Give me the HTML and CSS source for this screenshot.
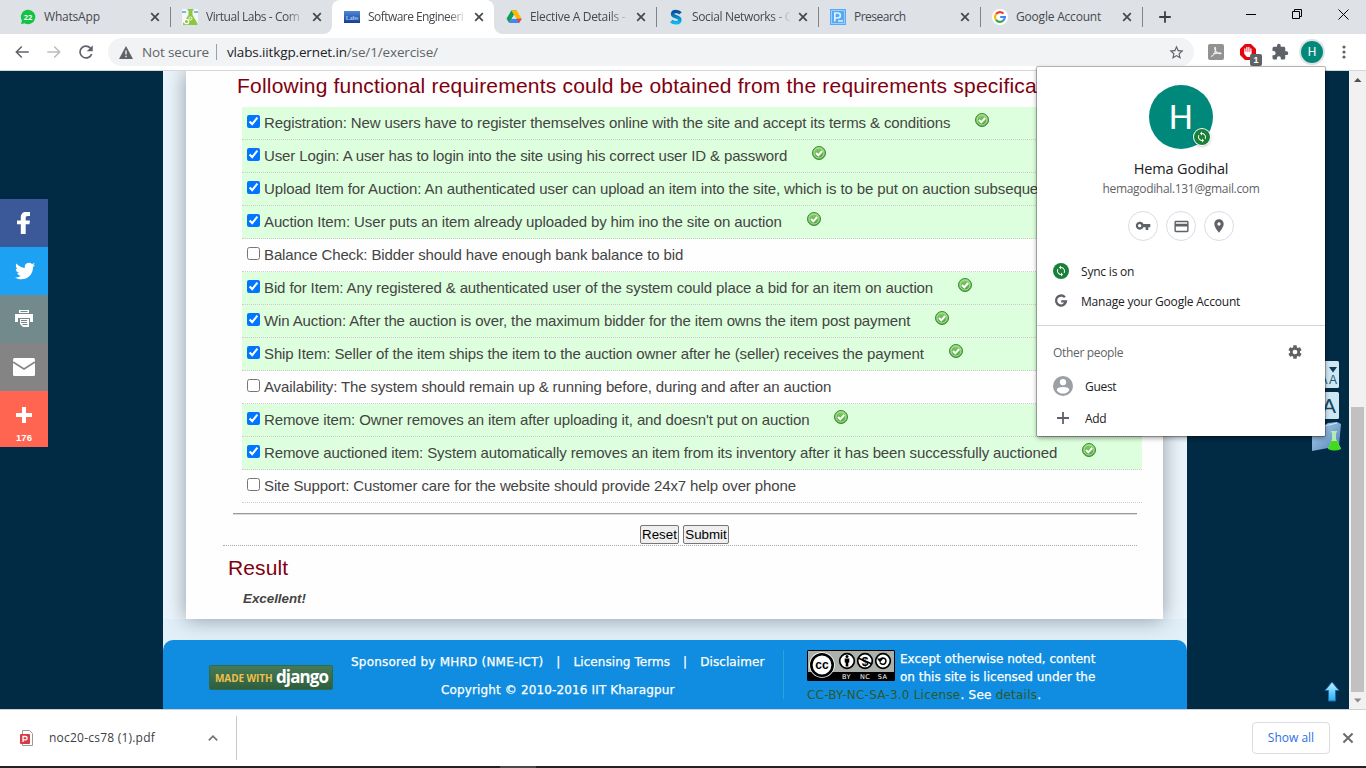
FILE: index.html
```html
<!DOCTYPE html>
<html lang="en">
<head>
<meta charset="utf-8">
<title>Software Engineering Virtual Lab</title>
<link rel="stylesheet" href="styles.css">
</head>
<body>
<svg class="defs" width="0" height="0">
  <defs>
    <linearGradient id="tickFill" x1="0" y1="0" x2="0" y2="1"><stop offset="0" stop-color="#8ad46c"/><stop offset="1" stop-color="#4a9e3c"/></linearGradient>
    <symbol id="tick" viewBox="0 0 14 14"><circle cx="7" cy="7" r="6.5" fill="url(#tickFill)" stroke="#3c8a38"/><circle cx="7" cy="7" r="5" fill="none" stroke="#b9e6a6" stroke-width=".9"/><path d="M4 7l2.3 2.3L10.2 5" fill="none" stroke="#fff" stroke-width="2"/></symbol>
    <symbol id="cross" viewBox="0 0 10 10"><path d="M1.2 1.2l7.6 7.6M8.8 1.2L1.2 8.8" fill="none" stroke="currentColor" stroke-width="1.7"/></symbol>
    <symbol id="sync" viewBox="0 0 24 24"><path fill="#fff" d="M12 4V1L8 5l4 4V6c3.31 0 6 2.69 6 6 0 1.01-.25 1.97-.7 2.8l1.46 1.46C19.54 15.03 20 13.57 20 12c0-4.42-3.58-8-8-8zm0 14c-3.31 0-6-2.69-6-6 0-1.01.25-1.97.7-2.8L5.24 7.74C4.46 8.97 4 10.43 4 12c0 4.42 3.58 8 8 8v3l4-4-4-4v3z"/></symbol>
  </defs>
</svg>

<header class="tabstrip">
  <div class="tab">
    <svg class="fav" viewBox="0 0 16 16"><path d="M8 .8a7.2 7.2 0 1 1-3.4 13.5L1 15.3l.9-3.6A7.2 7.2 0 0 1 8 .8z" fill="#12c443"/><text x="8" y="11" text-anchor="middle" class="fav-num">22</text></svg>
    <span class="tab-name t1">WhatsApp</span><svg class="close"><use href="#cross"/></svg>
  </div>
  <div class="tab sep">
    <svg class="fav" viewBox="0 0 16 16"><rect width="16" height="16" fill="#f4f6f7"/><path d="M0 3h4M12 3h4" stroke="#4aa9d8" stroke-width="1.4"/><path d="M5.5 0h6v1.5h-1V6l5 8.5V16H1v-1.5L6.500 6V1.500h-1z" fill="#8dc63f"/><circle cx="4.500" cy="12.500" r="2.200" fill="#8dc63f" stroke="#fff" stroke-width="1.300"/><circle cx="8.500" cy="9.500" r="1.500" fill="#8dc63f" stroke="#fff"/></svg>
    <span class="tab-name t2">Virtual Labs - Com</span><svg class="close"><use href="#cross"/></svg>
  </div>
  <div class="tab active">
    <svg class="fav" viewBox="0 0 16 16"><defs><linearGradient id="lb" x1="0" y1="0" x2="0" y2="1"><stop offset="0" stop-color="#4d86d8"/><stop offset="1" stop-color="#143f92"/></linearGradient></defs><rect y="2" width="16" height="12" fill="url(#lb)"/><text x="8" y="11" text-anchor="middle" class="fav-labs">Labs</text></svg>
    <span class="tab-name t3">Software Engineeri</span><svg class="close"><use href="#cross"/></svg>
  </div>
  <div class="tab">
    <svg class="fav" viewBox="0 0 16 16"><path d="M5.300 1.500h5.400L8 6.100 3.200 14 .5 9.800z" fill="#0f9d58"/><path d="M5.300 1.500h5.400l5 8.300h-5.200z" fill="#ffba00"/><path d="M3.200 14l2.500-4.200h10L13 14z" fill="#4285f4"/><path d="M10.500 9.800h5.200L13 14z" fill="#ea4335"/><path d="M8 6l2.300 3.800H5.700z" fill="#dee1e6"/></svg>
    <span class="tab-name t4">Elective A Details -</span><svg class="close"><use href="#cross"/></svg>
  </div>
  <div class="tab sep">
    <svg class="fav" viewBox="0 0 16 16"><defs><linearGradient id="sg" x1="0" y1="0" x2="0" y2="1"><stop offset="0" stop-color="#07509f"/><stop offset="1" stop-color="#0cb6ef"/></linearGradient></defs><path d="M12.500 4.400C10.500 2.200 4.600 1.400 4.600 5c0 3.500 7.200 2 7.200 5.900 0 3.500-6 3.500-8.600 1.200" fill="none" stroke="url(#sg)" stroke-width="3.600"/></svg>
    <span class="tab-name t5">Social Networks - C</span><svg class="close"><use href="#cross"/></svg>
  </div>
  <div class="tab sep">
    <svg class="fav" viewBox="0 0 16 16"><rect width="16" height="16" fill="#56a9f7"/><path d="M1.500 1.500h13v13h-13z" fill="none" stroke="#b3d8fc" stroke-width=".8"/><path d="M4.800 12.500V4h3a2.500 2.500 0 0 1 0 5h-3M8 12h5" fill="none" stroke="#e4f2ff" stroke-width="1.600"/></svg>
    <span class="tab-name t6">Presearch</span><svg class="close"><use href="#cross"/></svg>
  </div>
  <div class="tab sep">
    <svg class="fav" viewBox="0 0 16 16"><circle cx="8" cy="8" r="8" fill="#fff"/><g fill="none" stroke-width="2.200"><path d="M4 5.200A4.900 4.900 0 0 1 11.500 4.600" stroke="#ea4335"/><path d="M4 5.200a4.900 4.900 0 0 0 0 5.600" stroke="#fbbc05"/><path d="M4 10.800a4.900 4.900 0 0 0 7.200.8" stroke="#34a853"/><path d="M11.200 11.600A4.900 4.900 0 0 0 12.900 8H8.200" stroke="#4285f4"/></g></svg>
    <span class="tab-name t7">Google Account</span><svg class="close"><use href="#cross"/></svg>
  </div>
  <div class="newtab"><svg width="12" height="12" viewBox="0 0 12 12"><path d="M6 .2v11.600M.2 6h11.600" stroke="#3c4043" stroke-width="1.800"/></svg></div>
  <div class="winbtns">
    <svg width="10" height="12" viewBox="0 0 10 12"><path d="M0 5.500h10" stroke="#000"/></svg>
    <svg width="10" height="10" viewBox="0 0 10 10"><path d="M.5 2.500h7v7h-7zM2.500 2.500v-2h7v7h-2" fill="none" stroke="#000"/></svg>
    <svg width="11" height="11" viewBox="0 0 11 11"><path d="M.5.5l10 10M10.500.5l-10 10" stroke="#000"/></svg>
  </div>
</header>

<nav class="toolbar">
  <svg class="nav" viewBox="0 0 24 24"><path fill="#5f6368" d="M21 11H6.800l5.600-5.600L11 4l-8 8 8 8 1.400-1.400L6.800 13H21z"/></svg>
  <svg class="nav" viewBox="0 0 24 24"><path fill="#babcbe" d="M3 11h14.200l-5.600-5.600L13 4l8 8-8 8-1.400-1.400 5.600-5.600H3z"/></svg>
  <svg class="nav" viewBox="0 0 24 24"><path fill="#5f6368" d="M18.400 5.600A9 9 0 1 0 20.700 14.500h-2.400A6.800 6.800 0 1 1 16.800 7.200L13 11h8V3z"/></svg>
  <div class="omnibox">
    <svg width="14" height="13" viewBox="0 0 14 13"><path d="M7 0l7 13H0z" fill="#5f6368"/><path d="M7 4.500v4M7 9.700v1.500" stroke="#fff" stroke-width="1.300"/></svg>
    <span class="insecure">Not secure</span><i></i><span class="url">vlabs.iitkgp.ernet.in<b>/se/1/exercise/</b></span>
    <svg class="star" viewBox="0 0 24 24"><path fill="#5f6368" d="M22 9.240l-7.190-.62L12 2 9.190 8.630 2 9.240l5.460 4.730L5.820 21 12 17.270 18.180 21l-1.630-7.030L22 9.240zM12 15.400l-3.760 2.270 1-4.280-3.320-2.880 4.380-.38L12 6.100l1.710 4.040 4.380.38-3.320 2.880 1 4.280L12 15.400z"/></svg>
  </div>
  <div class="exts">
    <svg width="16" height="16" viewBox="0 0 16 16"><rect width="16" height="16" rx="2" fill="#929292"/><path d="M3 12.500c2.500-1 5.200-5 4.600-8.500-.3-1.400-1.500-.5-.8 1.200 1 2.600 3.200 5 6.200 4.400 1-.9-4-1.200-8 .7" fill="none" stroke="#eee" stroke-width="1.100"/></svg>
    <div class="blocker"><svg width="16" height="16" viewBox="0 0 16 16"><path d="M5 0h6l5 5v6l-5 5H5l-5-5V5z" fill="#e3060f"/><path d="M4.900 8V5M6.900 7V3.400M8.900 7V3.400M10.900 8V5" stroke="#fff" stroke-width="1.300" stroke-linecap="round"/><path d="M4.300 7.500h7.200v2.500l-1.700 3H7l-2.700-3z" fill="#fff"/></svg><span>1</span></div>
    <svg class="puzzle" width="18" height="18" viewBox="0 0 24 24"><path fill="#5f6368" d="M20.500 11H19V7c0-1.100-.9-2-2-2h-4V3.500a2.500 2.500 0 0 0-5 0V5H4c-1.100 0-2 .9-2 2v3.800h1.500a2.700 2.700 0 0 1 0 5.400H2V20c0 1.100.9 2 2 2h3.800v-1.500a2.700 2.700 0 0 1 5.400 0V22H17c1.100 0 2-.9 2-2v-4h1.500a2.500 2.500 0 0 0 0-5z"/></svg>
    <div class="me">H</div>
    <svg class="kebab" width="4" height="16" viewBox="0 0 4 16"><g fill="#5f6368"><circle cx="2" cy="3" r="1.600"/><circle cx="2" cy="8" r="1.600"/><circle cx="2" cy="13" r="1.600"/></g></svg>
  </div>
</nav>

<main class="viewport">
  <aside class="share">
    <div class="fb"><svg width="24" height="24" viewBox="0 0 24 24"><path fill="#fff" d="M8.800 23V13.200H5V9.600h3.800V6.500C8.800 3 10.600 1 14 1h4v3.900h-2.300c-1.500 0-2 .7-2 2v2.700H18l-.6 3.600h-3.700V23z"/></svg></div>
    <div class="tw"><svg width="24" height="24" viewBox="0 0 24 24"><path fill="#fff" d="M23.200 5.700c-.7.300-1.500.6-2.400.7.900-.5 1.500-1.300 1.800-2.300-.8.500-1.700.8-2.600 1A4.150 4.150 0 0 0 12.900 8.900C9.500 8.700 6.400 7.100 4.400 4.600c-1.100 1.900-.6 4.300 1.300 5.600-.7 0-1.300-.2-1.900-.5 0 2 1.400 3.700 3.300 4.100-.6.200-1.200.2-1.900.1.500 1.600 2 2.800 3.900 2.900A8.400 8.400 0 0 1 3 18.500c1.800 1.200 4 1.800 6.300 1.800 7.600 0 11.900-6.400 11.700-12.400.9-.6 1.600-1.300 2.200-2.200z"/></svg></div>
    <div class="pr"><svg width="20" height="20" viewBox="0 0 20 20"><path fill="#fff" d="M5 1h10v3H5zM1 5h18v8h-3V9H4v4H1zM6 10h9v8h-6l-3-3z"/><path d="M6.500 2.500h7" stroke="#738a8d"/><path d="M7 11.500h6M7 13.500h6M8.500 15.500h5" stroke="#738a8d"/></svg></div>
    <div class="ml"><svg width="22" height="18" viewBox="0 0 22 18"><rect width="22" height="18" rx="1.500" fill="#fff"/><path d="M0 4l11 7 11-7" fill="none" stroke="#848484" stroke-width="1.600"/></svg></div>
    <div class="more"><svg width="16" height="16" viewBox="0 0 16 16"><path d="M8 0v16M0 8h16" stroke="#fff" stroke-width="4"/></svg><span>176</span></div>
  </aside>

  <div class="site">
    <section class="sheet">
      <h2 class="ask">Following functional requirements could be obtained from the requirements specification</h2>
      <ul class="reqs">
        <li class="ok"><input type="checkbox" checked><label>Registration: New users have to register themselves online with the site and accept its terms &amp; conditions</label><svg><use href="#tick"/></svg></li>
        <li class="ok"><input type="checkbox" checked><label>User Login: A user has to login into the site using his correct user ID &amp; password</label><svg><use href="#tick"/></svg></li>
        <li class="ok"><input type="checkbox" checked><label>Upload Item for Auction: An authenticated user can upload an item into the site, which is to be put on auction subsequently</label></li>
        <li class="ok"><input type="checkbox" checked><label>Auction Item: User puts an item already uploaded by him ino the site on auction</label><svg><use href="#tick"/></svg></li>
        <li><input type="checkbox"><label>Balance Check: Bidder should have enough bank balance to bid</label></li>
        <li class="ok"><input type="checkbox" checked><label>Bid for Item: Any registered &amp; authenticated user of the system could place a bid for an item on auction</label><svg><use href="#tick"/></svg></li>
        <li class="ok"><input type="checkbox" checked><label>Win Auction: After the auction is over, the maximum bidder for the item owns the item post payment</label><svg><use href="#tick"/></svg></li>
        <li class="ok"><input type="checkbox" checked><label>Ship Item: Seller of the item ships the item to the auction owner after he (seller) receives the payment</label><svg><use href="#tick"/></svg></li>
        <li><input type="checkbox"><label>Availability: The system should remain up &amp; running before, during and after an auction</label></li>
        <li class="ok"><input type="checkbox" checked><label>Remove item: Owner removes an item after uploading it, and doesn't put on auction</label><svg><use href="#tick"/></svg></li>
        <li class="ok"><input type="checkbox" checked><label>Remove auctioned item: System automatically removes an item from its inventory after it has been successfully auctioned</label><svg><use href="#tick"/></svg></li>
        <li><input type="checkbox"><label>Site Support: Customer care for the website should provide 24x7 help over phone</label></li>
      </ul>
      <div class="rule"></div>
      <div class="actions"><button class="b1">Reset</button><button class="b2">Submit</button></div>
      <h2 class="result">Result</h2>
      <p class="verdict">Excellent!</p>
    </section>
    <footer class="foot">
      <div class="django"><span>MADE WITH</span><b>django</b></div>
      <div class="credits">
        <p class="links"><span class="sponsor">Sponsored by MHRD (NME-ICT)</span><i>|</i><span>Licensing Terms</span><i>|</i><span>Disclaimer</span></p>
        <p class="copy">Copyright © 2010-2016 IIT Kharagpur</p>
      </div>
      <div class="license">
        <svg class="cc" width="88" height="31" viewBox="0 0 88 31"><rect width="88" height="31" rx="1.500" fill="#000"/><path d="M1 1h86v21H1z" fill="#abb1aa"/><circle cx="15" cy="15" r="13.500" fill="#abb1aa"/><path d="M1 22h27v8H1z" fill="#000"/><circle cx="15" cy="15" r="12.800" fill="#fff"/><circle cx="15" cy="15" r="10.700" fill="#fff" stroke="#000" stroke-width="2.600"/><text x="15" y="18.800" text-anchor="middle" class="cc-main">cc</text><g fill="#fff" stroke="#000" stroke-width="1.700"><circle cx="40" cy="11" r="7.300"/><circle cx="58" cy="11" r="7.300"/><circle cx="76" cy="11" r="7.300"/></g><circle cx="40" cy="6.500" r="1.500"/><path d="M37.700 8.500h4.600v4h-1v4h-2.600v-4h-1z"/><text x="58" y="15.500" text-anchor="middle" class="cc-dollar">$</text><path d="M51 8l14 6" stroke="#000" stroke-width="1.500"/><path d="M73 9.500a3.200 3.200 0 1 1 0 3.200M71.500 9.200h3.200l-1.700 2z" fill="none" stroke="#000" stroke-width="1.500"/><text x="39.500" y="28.800" text-anchor="middle" class="cc-tag">BY</text><text x="58" y="28.800" text-anchor="middle" class="cc-tag">NC</text><text x="75.500" y="28.800" text-anchor="middle" class="cc-tag">SA</text></svg>
        <p class="l1">Except otherwise noted, content<br>on this site is licensed under the</p>
        <p class="l2"><a>CC-BY-NC-SA-3.0 License</a>. See <a>details</a>.</p>
      </div>
    </footer>
  </div>

  <div class="tools">
    <svg width="28" height="28" viewBox="0 0 28 28"><rect width="27" height="27" rx="1.500" fill="#cfe6f3"/><path d="M17 6h8l-4 5.500z" fill="#0c3a58"/><text x="17" y="22.500" class="tool-s">A</text><text x="7.500" y="22.500" class="tool-s">A</text></svg>
    <svg width="28" height="28" viewBox="0 0 28 28"><rect width="27" height="27" rx="1.500" fill="#cfe6f3"/><text x="10" y="21" class="tool-l">A</text></svg>
    <svg class="lab" width="31" height="32" viewBox="0 0 31 32"><defs><linearGradient id="fold" x1="0" y1="0" x2="1" y2="1"><stop offset="0" stop-color="#b4d5f2"/><stop offset="1" stop-color="#4c7fb3"/></linearGradient></defs><path d="M1 9l13-4 3-2 9-1 4 2-2 22-27 5z" fill="url(#fold)"/><path d="M1 9l25-6" stroke="#d4e7f7"/><path d="M20 11h6v1.500h-1V19l5 9.500q-6 3-13 0L21 19v-6.500h-1z" fill="#baf3b0" opacity=".9"/><path d="M20 21h6l4 8q-6.500 3-13 0z" fill="#42dc1c"/></svg>
  </div>
  <svg class="totop" width="16" height="24" viewBox="0 0 16 24"><defs><linearGradient id="up" x1="0" y1="0" x2="0" y2="1"><stop offset="0" stop-color="#c2f6ff"/><stop offset="1" stop-color="#24a9f0"/></linearGradient></defs><path d="M8 2l7 8.500h-3.500V21h-7V10.500H1z" fill="url(#up)" stroke="#1a6cb0"/></svg>
  <div class="scrollbar"><svg width="17" height="17" viewBox="0 0 17 17"><path d="M5 11h7.500L8.700 7z" fill="#505050"/></svg><div class="thumb"></div><svg class="dn" width="17" height="17" viewBox="0 0 17 17"><path d="M5 6.500h7.500l-3.800 4z" fill="#8c8c8c"/></svg></div>
</main>

<div class="shelf">
  <div class="dl">
    <svg width="16" height="16" viewBox="0 0 16 16"><path d="M3.500.5h7l3 3v12h-10z" fill="#fff" stroke="#9b9b9b"/><rect x="1" y="4" width="10" height="10" rx="1" fill="#d93a43"/><path d="M4 12V6.500h2.500a1.600 1.600 0 0 1 0 3.300H4" fill="none" stroke="#fff" stroke-width="1.300"/></svg>
    <span class="dl-name">noc20-cs78 (1).pdf</span>
    <svg class="chev" width="10" height="6" viewBox="0 0 10 6"><path d="M.8 5.400L5 1.200l4.200 4.200" fill="none" stroke="#757575" stroke-width="1.700"/></svg>
  </div>
  <button class="showall">Show all</button>
  <svg class="shelf-x"><use href="#cross"/></svg>
</div>
<div class="taskbar"><i></i></div>

<div class="profile">
  <div class="avatar">H<div class="badge"><svg width="12" height="12"><use href="#sync"/></svg></div></div>
  <p class="p-name">Hema Godihal</p>
  <p class="p-mail">hemagodihal.131@gmail.com</p>
  <div class="rounds">
    <div><svg width="16" height="16" viewBox="0 0 24 24"><path fill="#5f6368" d="M12.650 9A6 6 0 1 0 12.650 14H16v4h4v-4h3V9H12.650zM7 14a2.500 2.500 0 1 1 0-5 2.500 2.500 0 0 1 0 5z"/></svg></div>
    <div><svg width="17" height="17" viewBox="0 0 24 24"><path fill="#5f6368" d="M20 4H4c-1.110 0-2 .89-2 2v12c0 1.110.89 2 2 2h16c1.110 0 2-.89 2-2V6c0-1.110-.89-2-2-2zm0 14H4v-6h16v6zm0-10H4V6h16v2z"/></svg></div>
    <div><svg width="16" height="16" viewBox="0 0 24 24"><path fill="#5f6368" d="M12 2C8.130 2 5 5.130 5 9c0 5.250 7 13 7 13s7-7.750 7-13c0-3.870-3.130-7-7-7zm0 9.500a2.500 2.500 0 1 1 0-5 2.500 2.500 0 0 1 0 5z"/></svg></div>
  </div>
  <div class="p-row s1"><div class="syncdot"><svg width="12" height="12"><use href="#sync"/></svg></div><span class="m1">Sync is on</span></div>
  <div class="p-row s2"><svg width="16" height="16" viewBox="0 0 16 16"><path d="M11.900 4.300A5 5 0 1 0 13 8.300H8.200" fill="none" stroke="#5f6368" stroke-width="2.300"/></svg><span class="m2">Manage your Google Account</span></div>
  <div class="p-line"></div>
  <div class="p-row other"><span class="m3">Other people</span><svg width="16" height="16" viewBox="0 0 24 24"><path fill="#5f6368" d="M19.430 12.980c.04-.32.07-.64.07-.98s-.03-.66-.07-.98l2.110-1.650c.19-.15.24-.42.12-.64l-2-3.460c-.12-.22-.39-.3-.61-.22l-2.490 1c-.52-.4-1.080-.73-1.690-.98l-.38-2.650C14.460 2.180 14.250 2 14 2h-4c-.25 0-.46.18-.49.42l-.38 2.650c-.61.25-1.170.59-1.690.98l-2.490-1c-.23-.09-.49 0-.61.22l-2 3.460c-.13.22-.07.49.12.64l2.110 1.650c-.04.32-.07.65-.07.98s.03.66.07.98l-2.110 1.650c-.19.15-.24.42-.12.64l2 3.460c.12.22.39.3.61.22l2.490-1c.52.4 1.080.73 1.690.98l.38 2.650c.03.24.24.42.49.42h4c.25 0 .46-.18.49-.42l.38-2.650c.61-.25 1.170-.59 1.690-.98l2.490 1c.23.09.49 0 .61-.22l2-3.460c.12-.22.07-.49-.12-.64l-2.110-1.650zM12 15.500a3.500 3.500 0 1 1 0-7 3.500 3.500 0 0 1 0 7z"/></svg></div>
  <div class="p-row big"><svg width="20" height="20" viewBox="0 0 20 20"><circle cx="10" cy="10" r="10" fill="#9aa0a6"/><circle cx="10" cy="6.200" r="3.100" fill="#fff"/><path d="M3.700 14.200q0-3.200 6.300-3.200t6.300 3.200Q14 17.600 10 17.600t-6.300-3.400z" fill="#fff"/></svg><span class="m4">Guest</span></div>
  <div class="p-row big"><svg width="20" height="20" viewBox="0 0 20 20"><path d="M10 4v12M4 10h12" stroke="#5f6368" stroke-width="1.800"/></svg><span class="m5">Add</span></div>
</div>
</body>
</html>
```
FILE: styles.css
```css
* { box-sizing: border-box; margin: 0; padding: 0; }
body { width: 1366px; height: 768px; overflow: hidden; position: relative; display: flex; flex-direction: column; background: #fff; font-family: "Open Sans", "Noto Sans", sans-serif; font-size: 12px; }
svg { display: block; flex: none; }
.defs { position: absolute; }
i, b { font-style: normal; font-weight: normal; }

/* tab strip */
.tabstrip { height: 34px; flex: none; display: flex; background: #dee1e6; padding-left: 8px; }
.tab { width: 162px; height: 34px; display: flex; align-items: center; padding-left: 12px; position: relative; }
.tab.sep::before { content: ""; position: absolute; left: 0; top: 7px; width: 1px; height: 20px; background: #808387; }
.tab.active { background: #fff; border-radius: 8px 8px 0 0; }
.tab.active::before, .tab.active::after { content: ""; position: absolute; bottom: 0; width: 8px; height: 8px; }
.tab.active::before { left: -8px; background: radial-gradient(circle at 0 0, #dee1e6 7.5px, #fff 8px); }
.tab.active::after { right: -8px; background: radial-gradient(circle at 100% 0, #dee1e6 7.5px, #fff 8px); z-index: 1; }
.fav { width: 16px; height: 16px; }
.fav-num { font: bold 7.5px "Open Sans", sans-serif; fill: #fff; }
.fav-labs { font: bold 6px "Liberation Serif", serif; fill: #a9c8f5; }
.tab-name { width: 99px; margin-left: 8px; white-space: nowrap; line-height: 18px; color: #45494d; letter-spacing: -.2px; -webkit-mask-image: linear-gradient(90deg, #000 80px, transparent 99px); mask-image: linear-gradient(90deg, #000 80px, transparent 99px); }
.t2 { letter-spacing: -.45px; }
.t3 { letter-spacing: -.55px; }
.t4 { letter-spacing: -.3px; }
.t5 { letter-spacing: -.35px; }
.t6 { letter-spacing: -.5px; }
.t1, .t6, .t7 { -webkit-mask-image: none; mask-image: none; }
.close { width: 10px; height: 10px; margin-left: 7px; color: #45494d; }
.newtab { width: 46px; display: flex; align-items: center; justify-content: center; position: relative; }
.newtab::before { content: ""; position: absolute; left: 0; top: 7px; width: 1px; height: 20px; background: #808387; }
.winbtns { flex: 1; display: flex; justify-content: flex-end; gap: 36px; padding: 9px 17px 0 0; }

/* toolbar */
.toolbar { height: 37px; flex: none; display: flex; align-items: center; background: #fff; border-bottom: 1px solid #d5d7da; padding: 0 0 0 13px; }
.nav { width: 18px; height: 18px; margin-right: 14px; }
.omnibox { width: 1086px; height: 28px; border-radius: 14px; background: #f1f3f4; display: flex; align-items: center; padding-left: 11px; margin-left: -1px; font-size: 14px; }
.insecure { color: #5f6368; margin-left: 9px; width: 74px; white-space: nowrap; letter-spacing: -.15px; font-size: 13.500px; }
.omnibox i { width: 1px; height: 16px; background: #9aa0a6; margin-right: 10px; }
.url { color: #202124; font-size: 13.500px; letter-spacing: -.14px; white-space: nowrap; }
.url b { color: #5f6368; }
.star { width: 17px; height: 17px; margin-left: auto; margin-right: 9px; }
.exts { flex: 1; display: flex; align-items: center; padding-left: 14px; gap: 16px; }
.puzzle { margin-left: -1px; }
.blocker { position: relative; }
.blocker span { position: absolute; left: 10px; top: 10px; width: 12px; height: 12px; border-radius: 2px; background: #5f6368; color: #fff; font: bold 9px/12px "Liberation Sans", sans-serif; text-align: center; }
.me { width: 22px; height: 22px; margin-left: -4px; border-radius: 50%; background: #00897b; box-shadow: 0 0 0 2px #dfe1e3; color: #fff; font: 12px/22px Roboto, sans-serif; text-align: center; }
.kebab { margin-left: 3px; }

/* page viewport */
.viewport { height: 638px; flex: none; position: relative; background: #012a44; display: flex; overflow: hidden; }
.share { width: 48px; margin-top: 128px; flex: none; }
.share div { height: 48px; display: flex; align-items: center; justify-content: center; }
.share .fb { background: #3b5998; }
.share .tw { background: #1da1f2; }
.share .pr { background: #738a8d; }
.share .ml { background: #848484; }
.share .more { height: 56px; background: #ff6550; flex-direction: column; justify-content: flex-start; padding-top: 16px; }
.share span { color: #fff; font: bold 9.500px/12px "Liberation Sans", sans-serif; margin-top: 9px; }

.site { width: 1024px; margin-left: 115px; flex: none; height: 638px; overflow: hidden; background: linear-gradient(#ecf5fc 548px, #e2f0fa 548px); }
.sheet { width: 977px; height: 548px; margin-left: 23px; background: #fefefe; box-shadow: 0 0 20px rgba(50, 60, 70, .5); font-family: "Liberation Sans", Arial, sans-serif; color: #444; }
h2 { font-weight: normal; color: #800010; font-size: 21px; white-space: nowrap; line-height: 24px; }
.ask { padding: 3px 0 9px 51px; letter-spacing: .2px; }
.reqs { list-style: none; width: 900px; margin-left: 56px; }
.reqs li { height: 33px; display: flex; align-items: flex-start; border-bottom: 1px dotted #ccc; padding-left: 5px; }
.reqs .ok { background: #dfd; }
.reqs input { width: 13px; height: 13px; margin-top: 8px; flex: none; }
.reqs label { margin-left: 4px; font-size: 15px; line-height: 32px; white-space: nowrap; letter-spacing: -.117px; }
.reqs svg { width: 14px; height: 14px; margin: 6px 0 0 25px; }
.rule { margin: 10px 26px 0 47px; height: 2px; background: #999; border-bottom: 1px solid #ddd; }
.actions { margin: 0 26px 0 37px; height: 31px; border-bottom: 1px dotted #aaa; display: flex; gap: 4px; padding: 10px 0 0 417px; }
.actions button { height: 19px; font: 13.333px/15px "Liberation Sans", sans-serif; color: #000; background: #efefef; border: 1px solid #767676; border-radius: 2px; }
.b1 { width: 39px; }
.b2 { width: 46px; }
.result { padding: 10px 0 0 42px; letter-spacing: .1px; }
.verdict { padding: 11px 0 0 57px; font: italic bold 13.333px/16px "Liberation Sans", sans-serif; }

.foot { height: 69px; margin-top: 21px; background: #108de0; border-radius: 10px 10px 0 0; display: flex; padding-left: 46px; font: 12px/18px "DejaVu Sans", sans-serif; color: #fff; -webkit-text-stroke: .25px; }
.django { width: 124px; height: 25px; margin-top: 25px; display: flex; align-items: center; padding-left: 5px; border-radius: 2px; background: linear-gradient(#467a55, #2d5f3e); border: 1px solid #2f6b4a; -webkit-text-stroke: 0; white-space: nowrap; }
.django span { color: #f0c04c; font: bold 10px/20px "Open Sans", sans-serif; width: 61px; letter-spacing: -.1px; }
.django b { font: bold 17px/20px "Open Sans", sans-serif; letter-spacing: -.9px; margin-top: -2px; }
.credits { width: 451px; height: 49px; margin-top: 10px; border-right: 1px solid #2aa5d8; padding: 3px 0 0 18px; }
.links { display: flex; white-space: nowrap; letter-spacing: .07px; }
.sponsor { letter-spacing: .22px; }
.links i { margin: 0 13px; }
.copy { margin: 10px 0 0 90px; white-space: nowrap; letter-spacing: .14px; }
.license { margin: 10px 0 0 23px; white-space: nowrap; }
.cc { float: left; margin-right: 5px; -webkit-text-stroke: 0; }
.l2 { clear: both; letter-spacing: .22px; }
.l1 { height: 36px; }
.license a { color: #2c5a2c; -webkit-text-stroke: 0; }
.cc-main { font: bold 12px "Liberation Sans", sans-serif; }
.cc-dollar { font: bold 12px "Liberation Sans", sans-serif; }
.cc-tag { font: 6.500px "DejaVu Sans", sans-serif; fill: #fff; letter-spacing: .4px; }

.tools { position: absolute; left: 1312px; top: 290px; display: flex; flex-direction: column; gap: 3px; }
.lab { margin: -3px 0 0 -1px; }
.tool-s { font: 12px "Liberation Sans", sans-serif; fill: #1d5674; }
.tool-l { font: 21px "Liberation Sans", sans-serif; fill: #14475f; }
.totop { position: absolute; left: 1324px; top: 609px; }
.scrollbar { position: absolute; right: 0; top: 0; width: 17px; height: 638px; background: #f1f1f1; display: flex; flex-direction: column; }
.thumb { margin: 319px 2px 0; width: 13px; height: 285px; background: #c1c1c1; }
.dn { margin-top: auto; }

/* download shelf */
.shelf { height: 57px; flex: none; border-top: 1px solid #cfd1d4; background: #fff; display: flex; align-items: center; padding-bottom: 1px; }
.dl { width: 237px; height: 44px; border-right: 1px solid #c8c8c8; display: flex; align-items: center; padding-left: 19px; }
.dl-name { width: 159px; margin-left: 14px; color: #3c4043; white-space: nowrap; letter-spacing: .22px; }
.showall { margin-left: auto; width: 78px; height: 32px; border: 1px solid #dadce0; border-radius: 4px; background: #fff; color: #2b6fe8; font: 12px "Open Sans", sans-serif; padding-bottom: 1px; }
.shelf-x { width: 12px; height: 12px; margin: 0 12px; color: #6a6d70; }
.taskbar { flex: 1; background: #222224; }
.taskbar i { display: block; width: 36px; height: 2px; margin-left: 500px; background: #4a4a4a; }

/* profile menu */
.profile { position: absolute; left: 1037px; top: 67px; width: 288px; height: 369px; background: #fff; box-shadow: 0 0 0 1px rgba(0, 0, 0, .25), 0 2px 5px rgba(0, 0, 0, .4); border-radius: 1px; display: flex; flex-direction: column; align-items: center; color: #202124; padding-top: 18px; white-space: nowrap; }
.avatar { width: 64px; height: 64px; border-radius: 50%; background: #00897b; color: #fff; font: 34px/64px Roboto, sans-serif; text-align: center; position: relative; flex: none; }
.badge, .syncdot { width: 16px; height: 16px; border-radius: 50%; background: #188038; display: flex; align-items: center; justify-content: center; flex: none; }
.badge { position: absolute; left: 45px; top: 44px; box-shadow: 0 0 0 1px #fff, 0 1px 3px rgba(0, 0, 0, .4); }
.p-name { font-size: 14.500px; line-height: 20px; margin-top: 10px; letter-spacing: -.15px; }
.p-mail { line-height: 16px; margin-top: 2px; color: #5f6368; letter-spacing: -.32px; }
.rounds { display: flex; gap: 8px; margin: 14px 0 15px; }
.rounds div { width: 30px; height: 30px; border: 1px solid #dadce0; border-radius: 50%; display: flex; align-items: center; justify-content: center; }
.p-row { width: 288px; height: 30px; display: flex; align-items: center; gap: 12px; padding-left: 16px; flex: none; letter-spacing: -.2px; }
.p-line { width: 288px; height: 1px; background: #d5d7da; margin-top: 9px; flex: none; }
.other { margin-top: 11px; justify-content: space-between; padding-right: 22px; color: #5f6368; letter-spacing: -.33px; }
.big { height: 32px; margin-top: 3px; letter-spacing: -.3px; }
.big + .big { margin-top: 0; }
```
